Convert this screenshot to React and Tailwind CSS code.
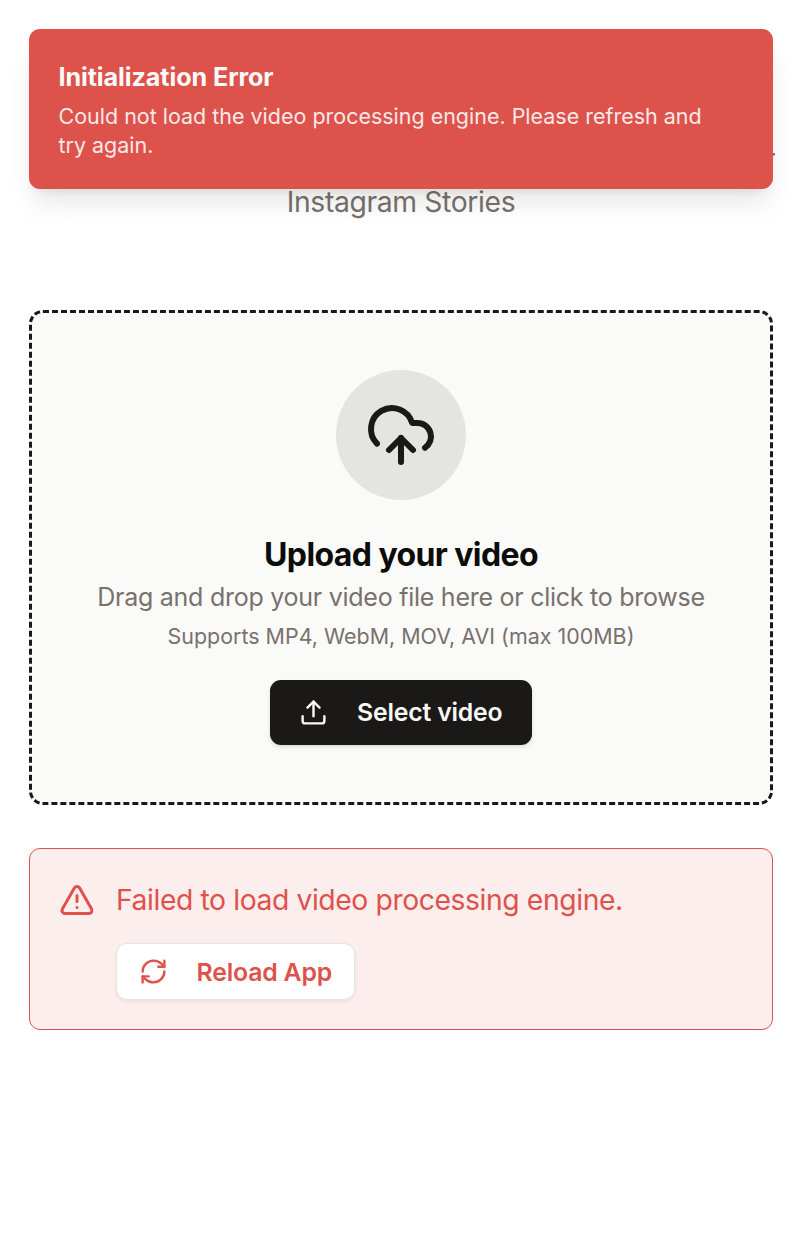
import { CloudUpload, RefreshCw, TriangleAlert, Upload } from "lucide-react";

function Toast() {
  return (
    <div
      role="alert"
      className="absolute left-[29px] top-[29px] h-[160px] w-[744px] rounded-[11px] bg-[#de524c] pl-[29.5px] pt-[31px] text-[#fafaf9] shadow-[0_18px_27px_-5px_rgba(0,0,0,0.1),0_7px_11px_-7px_rgba(0,0,0,0.1)]"
    >
      <p className="text-[25.2px] font-bold leading-[34px] tracking-[-0.11px]">Initialization Error</p>
      <p className="mt-[8px] whitespace-nowrap text-[21.47px] leading-[29px] opacity-90">
        Could not load the video processing engine. Please refresh and
        <br />
        try again.
      </p>
    </div>
  );
}

function Dropzone() {
  return (
    <section className="flex h-[495px] flex-col items-center rounded-[14px] border-[3px] border-dashed border-[#1a1917] bg-[#fafaf8] pt-[57px]">
      <div className="flex size-[130px] items-center justify-center rounded-full bg-[#e4e4e2]">
        <CloudUpload className="size-[72px] text-[#1a1917]" />
      </div>
      <h2 className="mt-[33px] whitespace-nowrap text-[32px] font-bold leading-[44px] tracking-[-0.6px] text-[#0c0c0a]">
        Upload your video
      </h2>
      <p className="mt-[2px] whitespace-nowrap text-[25px] leading-[36px] tracking-[-0.26px] text-[#78716c]">
        Drag and drop your video file here or click to browse
      </p>
      <p className="mt-[7px] whitespace-nowrap text-[21.45px] leading-[29px] text-[#78716c]">
        Supports MP4, WebM, MOV, AVI (max 100MB)
      </p>
      <button className="mt-[29px] flex h-[65px] w-[262px] items-center rounded-[11px] bg-[#1a1917] pl-[29px] text-[#fafaf9] shadow-[0_2px_4px_rgba(0,0,0,0.12)]">
        <Upload className="size-[29px] shrink-0" />
        <span className="ml-[29px] whitespace-nowrap text-[24.8px] font-semibold tracking-[-0.18px]">
          Select video
        </span>
      </button>
    </section>
  );
}

function ErrorPanel() {
  return (
    <section className="mt-[43px] flex h-[182px] rounded-[11px] border border-[#de524c] bg-[#fceeed] pl-[29px] pt-[29px] text-[#de524c]">
      <TriangleAlert className="mt-[4px] size-[36px] shrink-0" />
      <div className="ml-[21px]">
        <p className="whitespace-nowrap text-[28.3px] leading-[44px] tracking-[-0.41px]">
          Failed to load video processing engine.
        </p>
        <button className="mt-[21px] flex h-[57px] w-[239px] items-center rounded-[11px] border border-[#e7e5e4] bg-white pl-[22px] shadow-[0_2px_4px_rgba(0,0,0,0.06)]">
          <RefreshCw className="size-[29px] shrink-0" />
          <span className="ml-[28.5px] mt-[2px] whitespace-nowrap text-[24.8px] font-semibold tracking-[-0.18px]">
            Reload App
          </span>
        </button>
      </div>
    </section>
  );
}

export default function App() {
  return (
    <div className="relative h-[1252px] w-[802px] overflow-hidden bg-white px-[29px] font-['Inter',sans-serif]">
      <header className="flex h-[310px] flex-col items-center pt-[138px] text-[28.3px] leading-[43px] tracking-[-0.36px] text-[#78716c]">
        <p className="-mr-[2px] self-end whitespace-nowrap">for</p>
        <p className="whitespace-nowrap">Instagram Stories</p>
      </header>
      <Dropzone />
      <ErrorPanel />
      <Toast />
    </div>
  );
}
